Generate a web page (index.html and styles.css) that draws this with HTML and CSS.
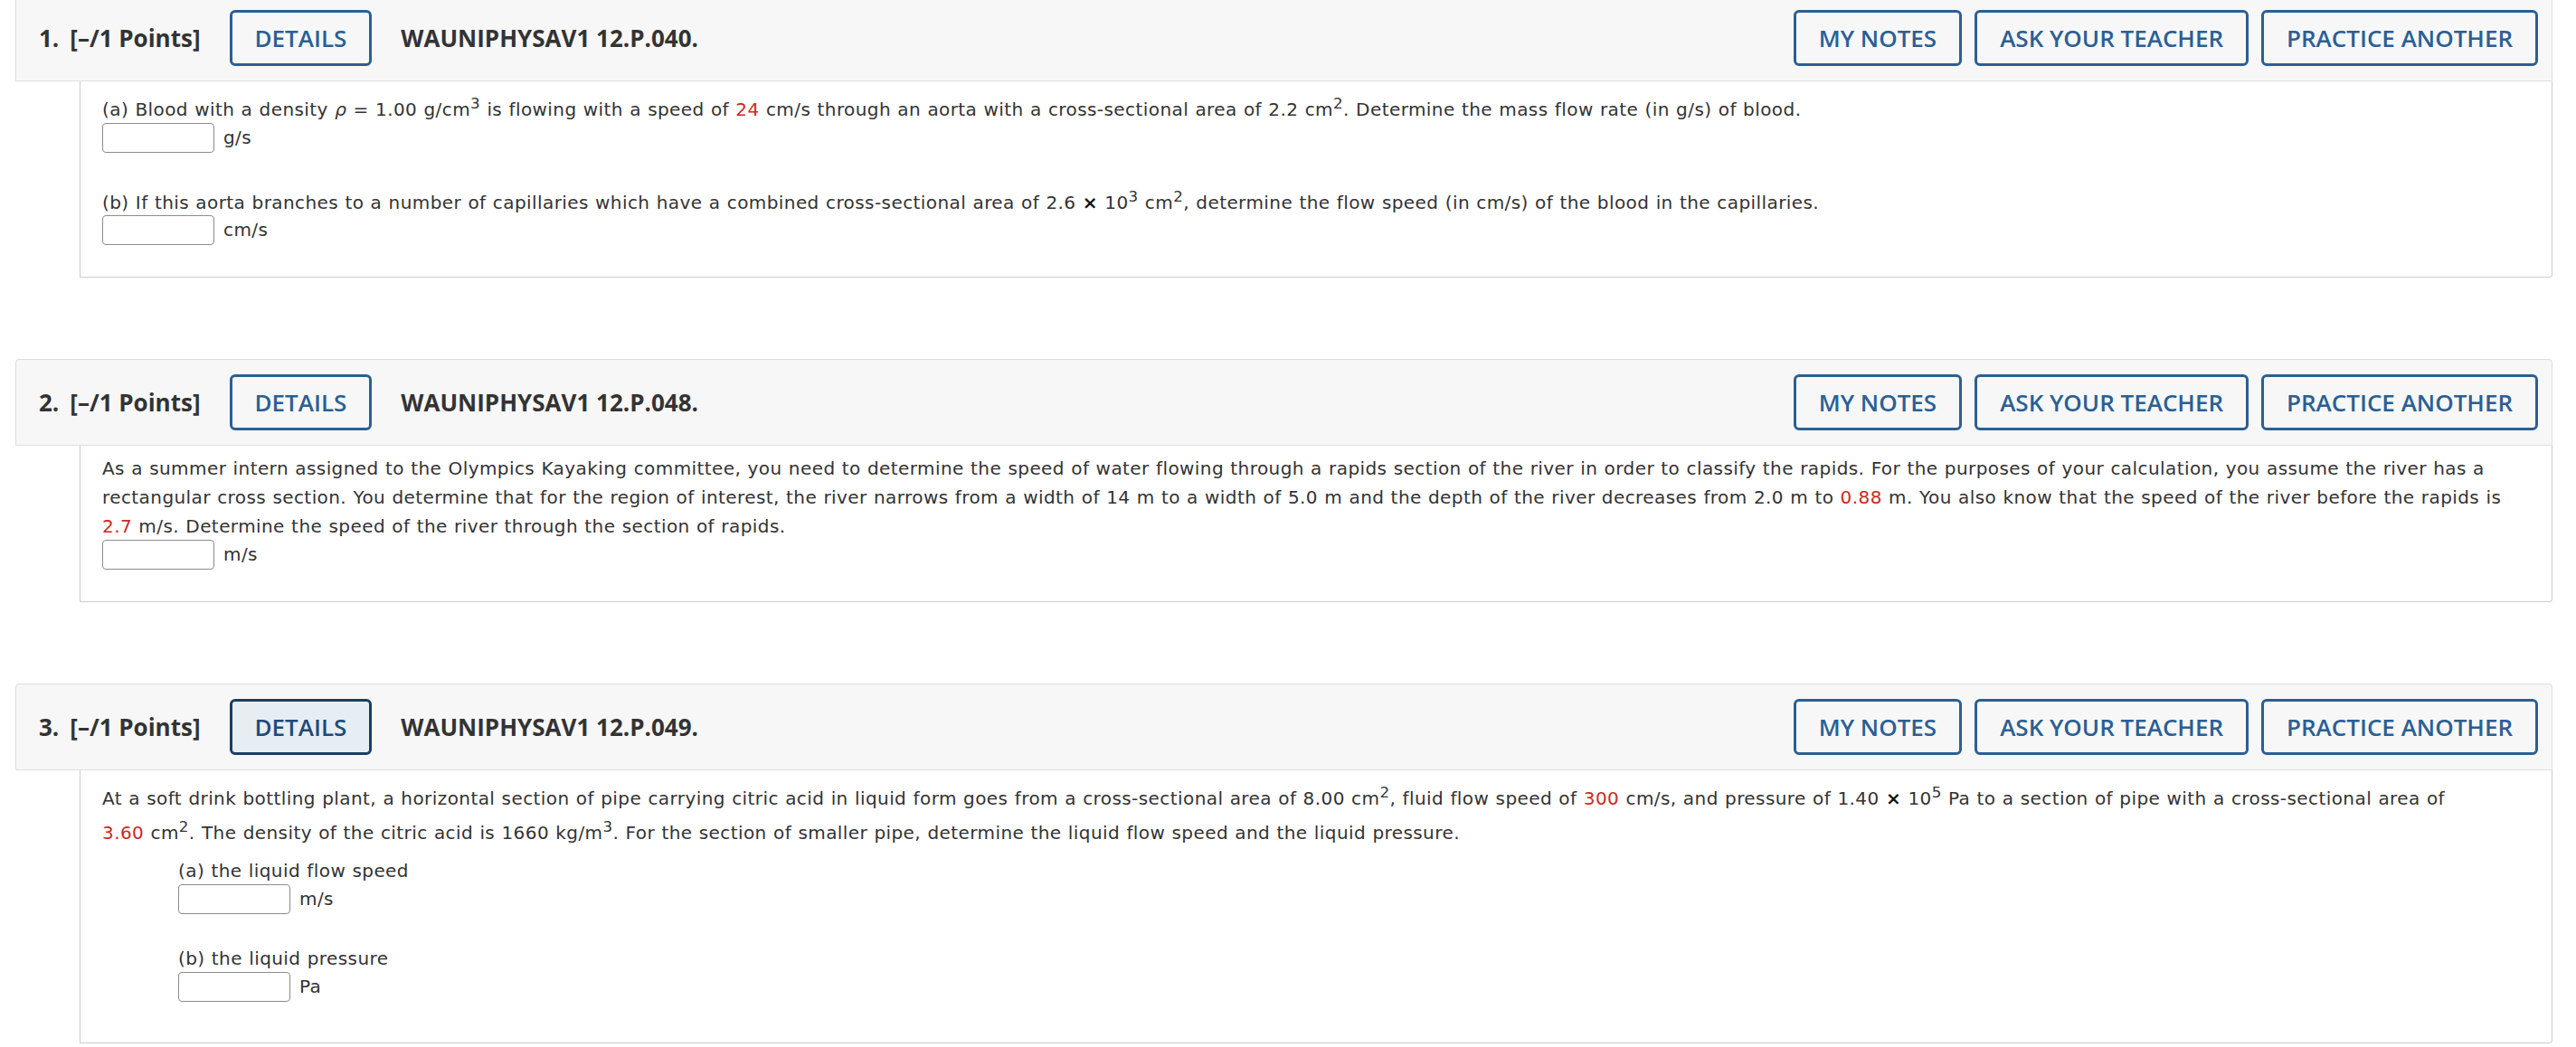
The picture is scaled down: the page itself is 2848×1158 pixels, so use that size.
FILE: index.html
```html
<!DOCTYPE html>
<html lang="en">
<head>
    <meta charset="UTF-8">
    <title>Assignment</title>
    <link rel="stylesheet" href="styles.css">
</head>
<body>
<div class="page">

    <!-- Question 1 -->
    <div class="question first">
        <div class="q-header">
            <div class="q-info">
                <span class="q-label"><span class="q-num">1.</span>[&ndash;/1 Points]</span>
                <button class="btn">DETAILS</button>
                <span class="q-title">WAUNIPHYSAV1 12.P.040.</span>
            </div>
            <div class="q-actions">
                <button class="btn">MY NOTES</button>
                <button class="btn">ASK YOUR TEACHER</button>
                <button class="btn">PRACTICE ANOTHER</button>
            </div>
        </div>
        <div class="q-body">
            <p class="line">(a) Blood with a density <i>&rho;</i> = 1.00 g/cm<sup>3</sup> is flowing with a speed of <span class="val">24</span> cm/s through an aorta with a cross-sectional area of 2.2 cm<sup>2</sup>. Determine the mass flow rate (in g/s) of blood.</p>
            <div class="answer"><input type="text" class="answer-box"><span class="unit">g/s</span></div>
            <p class="line part">(b) If this aorta branches to a number of capillaries which have a combined cross-sectional area of 2.6 <b class="times">&times;</b> 10<sup>3</sup> cm<sup>2</sup>, determine the flow speed (in cm/s) of the blood in the capillaries.</p>
            <div class="answer"><input type="text" class="answer-box"><span class="unit">cm/s</span></div>
        </div>
    </div>

    <!-- Question 2 -->
    <div class="question">
        <div class="q-header">
            <div class="q-info">
                <span class="q-label"><span class="q-num">2.</span>[&ndash;/1 Points]</span>
                <button class="btn">DETAILS</button>
                <span class="q-title">WAUNIPHYSAV1 12.P.048.</span>
            </div>
            <div class="q-actions">
                <button class="btn">MY NOTES</button>
                <button class="btn">ASK YOUR TEACHER</button>
                <button class="btn">PRACTICE ANOTHER</button>
            </div>
        </div>
        <div class="q-body">
            <p class="line">As a summer intern assigned to the Olympics Kayaking committee, you need to determine the speed of water flowing through a rapids section of the river in order to classify the rapids. For the purposes of your calculation, you assume the river has a rectangular cross section. You determine that for the region of interest, the river narrows from a width of 14 m to a width of 5.0 m and the depth of the river decreases from 2.0 m to <span class="qty"><span class="val">0.88</span> m.</span> You also know that the speed of the river before the rapids is <span class="qty"><span class="val">2.7</span> m/s.</span> Determine the speed of the river through the section of rapids.</p>
            <div class="answer"><input type="text" class="answer-box"><span class="unit">m/s</span></div>
        </div>
    </div>

    <!-- Question 3 -->
    <div class="question">
        <div class="q-header">
            <div class="q-info">
                <span class="q-label"><span class="q-num">3.</span>[&ndash;/1 Points]</span>
                <button class="btn focused">DETAILS</button>
                <span class="q-title">WAUNIPHYSAV1 12.P.049.</span>
            </div>
            <div class="q-actions">
                <button class="btn">MY NOTES</button>
                <button class="btn">ASK YOUR TEACHER</button>
                <button class="btn">PRACTICE ANOTHER</button>
            </div>
        </div>
        <div class="q-body">
            <p class="line">At a soft drink bottling plant, a horizontal section of pipe carrying citric acid in liquid form goes from a cross-sectional area of 8.00 cm<sup>2</sup>, fluid flow speed of <span class="qty"><span class="val">300</span> cm/s,</span> and pressure of 1.40 <b class="times">&times;</b> 10<sup>5</sup> Pa to a section of pipe with a cross-sectional area of <span class="qty"><span class="val">3.60</span> cm<sup>2</sup>.</span> The density of the citric acid is 1660 kg/m<sup>3</sup>. For the section of smaller pipe, determine the liquid flow speed and the liquid pressure.</p>
            <div class="parts">
                <p class="line">(a) the liquid flow speed</p>
                <div class="answer"><input type="text" class="answer-box"><span class="unit">m/s</span></div>
                <p class="line part">(b) the liquid pressure</p>
                <div class="answer"><input type="text" class="answer-box"><span class="unit">Pa</span></div>
            </div>
        </div>
    </div>

</div>
</body>
</html>
```

FILE: styles.css
```css
body {
    margin: 0;
    background-color: #ffffff;
    color: #333333;
    font-family: "DejaVu Sans", Verdana, sans-serif;
}

.page {
    padding: 0 26px 0 17px;
}

/* One question block */
.question {
    margin-bottom: 90px;
}

.question.first {
    margin-top: -6px;
}

.question:last-child {
    margin-bottom: 0;
}

.q-header {
    display: flex;
    align-items: center;
    justify-content: space-between;
    padding: 16px 15px 16px 25px;
    background-color: #f7f7f7;
    border: 1px solid #dddddd;
    border-radius: 4px 4px 0 0;
    font-family: "Open Sans", sans-serif;
    font-size: 26px;
}

.q-info {
    display: flex;
    align-items: center;
    gap: 32px;
}

.q-label,
.q-title {
    font-weight: 700;
    color: #333333;
}

.q-num {
    margin-right: 12px;
}

.q-actions {
    display: flex;
    gap: 14px;
}

/* Header buttons */
.btn {
    padding: 10px 25px;
    background-color: transparent;
    border: 3px solid #2b5f94;
    border-radius: 6px;
    color: #2b5f94;
    font-family: "Open Sans", sans-serif;
    font-size: 26px;
    font-weight: 600;
    line-height: 36px;
}

.btn.focused {
    background-color: #e7eef3;
    border-color: #1b3e62;
    color: #1f4a78;
}

/* Question text */
.q-body {
    margin-left: 71px;
    padding: 9px 24px 35px 24px;
    border: 1px solid #cccccc;
    border-top: none;
    border-radius: 0 0 4px 0;
    font-size: 20px;
    line-height: 32px;
    letter-spacing: 0.42px;
    word-spacing: 0.5px;
}

.line {
    margin: 0;
}

.line.part {
    margin-top: 33px;
}

.qty {
    white-space: nowrap;
}

.val {
    color: #cc2a20;
}

.times {
    color: #111111;
}

.answer {
    display: flex;
    align-items: center;
    gap: 10px;
    margin-top: -1px;
}

.answer-box {
    box-sizing: border-box;
    width: 124px;
    height: 33px;
    margin: 0;
    border: 1px solid #8c8c8c;
    border-radius: 4px;
    background-color: #ffffff;
}

.unit {
    line-height: 33px;
}

.parts {
    margin: 10px 0 10px 84px;
}
```
